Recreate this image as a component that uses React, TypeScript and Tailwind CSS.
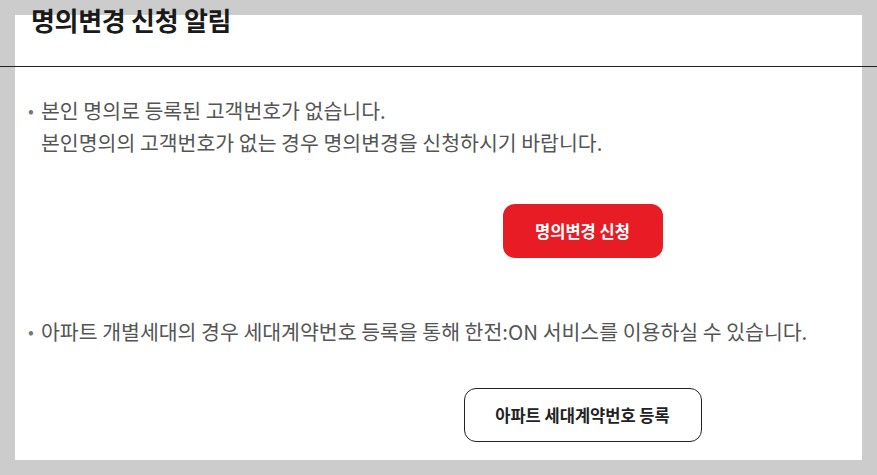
export default function App() {
  return (
    <div className="h-[475px] w-[877px] bg-[#cccccc] p-[15px] font-['Noto_Sans_CJK_KR','Noto_Sans',sans-serif]">
      <div className="flex h-full flex-col bg-white">
        <div className="-mx-[15px] -mt-[15px] h-[67px] shrink-0 border-b border-[#222222] pl-[31px]">
          <h1 className="pt-[5px] text-[26px] font-bold leading-[30px] tracking-[-0.3px] text-[#1a1a1a]">
            명의변경 신청 알림
          </h1>
        </div>
        <div className="mt-[27px] flex pl-[13px] text-[20.5px] leading-[32px] text-[#555555]">
          <span className="w-[13px] shrink-0 text-[17px] text-[#777777]">•</span>
          <p>
            본인 명의로 등록된 고객번호가 없습니다.
            <br />
            본인명의의 고객번호가 없는 경우 명의변경을 신청하시기 바랍니다.
          </p>
        </div>
        <div className="mt-[46px] flex justify-center pl-[288px]">
          <button className="h-[54px] w-[160px] rounded-[12px] bg-[#e81c24] text-[16.5px] font-bold text-white">
            명의변경 신청
          </button>
        </div>
        <div className="mt-[57px] flex pl-[13px] text-[20.5px] leading-[32px] text-[#555555]">
          <span className="w-[13px] shrink-0 text-[17px] text-[#777777]">•</span>
          <p>아파트 개별세대의 경우 세대계약번호 등록을 통해 한전:ON 서비스를 이용하실 수 있습니다.</p>
        </div>
        <div className="mt-[41px] flex justify-center pl-[288px]">
          <button className="h-[54px] w-[238px] rounded-[12px] border border-[#222222] bg-white text-[16.5px] font-bold text-[#222222]">
            아파트 세대계약번호 등록
          </button>
        </div>
      </div>
    </div>
  );
}
